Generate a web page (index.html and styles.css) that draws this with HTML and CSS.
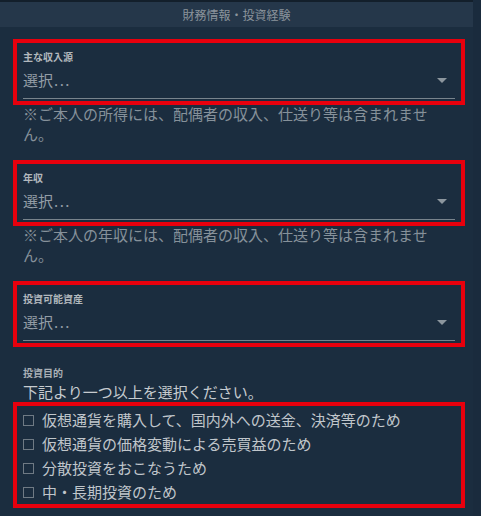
FILE: index.html
```html
<!DOCTYPE html>
<html lang="ja">
<head>
<meta charset="utf-8">
<title>財務情報・投資経験</title>
<link rel="stylesheet" href="styles.css">
</head>
<body>
<div class="panel">
  <div class="header">財務情報・投資経験</div>
  <div class="content">
    <div class="field">
      <div class="label">主な収入源</div>
      <div class="select"><span>選択<span class="dots">...</span></span><span class="arrow"></span></div>
    </div>
    <div class="helper">※ご本人の所得には、配偶者の収入、仕送り等は含まれません。</div>

    <div class="field">
      <div class="label">年収</div>
      <div class="select"><span>選択<span class="dots">...</span></span><span class="arrow"></span></div>
    </div>
    <div class="helper">※ご本人の年収には、配偶者の収入、仕送り等は含まれません。</div>

    <div class="field">
      <div class="label">投資可能資産</div>
      <div class="select"><span>選択<span class="dots">...</span></span><span class="arrow"></span></div>
    </div>

    <div class="section-label">投資目的</div>
    <div class="intro">下記より一つ以上を選択ください。</div>
    <div class="checks">
      <div class="check"><span class="box"></span><span>仮想通貨を購入して、国内外への送金、決済等のため</span></div>
      <div class="check"><span class="box"></span><span>仮想通貨の価格変動による売買益のため</span></div>
      <div class="check"><span class="box"></span><span>分散投資をおこなうため</span></div>
      <div class="check"><span class="box"></span><span>中・長期投資のため</span></div>
    </div>
  </div>
</div>
</body>
</html>
```
FILE: styles.css
```css
html, body {
  margin: 0;
  padding: 0;
}
body {
  background: #1a2b3d;
  font-family: "Noto Sans CJK JP", "Noto Sans", sans-serif;
  width: 481px;
  height: 516px;
  overflow: hidden;
}
.panel {
  width: 473px;
  min-height: 516px;
  background: #1b2d3f;
}
.header {
  height: 25px;
  line-height: 25px;
  border-top: 2px solid #131f2b;
  background: #25374a;
  color: #8b949c;
  font-size: 12px;
  text-align: center;
}
.content {
  padding: 12px 8px 0 13px;
}
.field {
  border: 4px solid #e8000d;
  padding: 7px 6px 2px 6px;
}
.label {
  font-size: 10px;
  line-height: 14px;
  font-weight: bold;
  color: #b2b8bd;
}
.select {
  margin-top: 5px;
  display: flex;
  justify-content: space-between;
  align-items: center;
  font-size: 15px;
  line-height: 22px;
  color: #939da6;
  padding-bottom: 7px;
  border-bottom: 1px solid #78838c;
}
.dots {
  letter-spacing: 1.5px;
  margin-left: 1px;
}
.arrow {
  width: 0;
  height: 0;
  border-left: 5px solid transparent;
  border-right: 5px solid transparent;
  border-top: 5px solid #8c969e;
  margin-right: 8px;
}
.helper {
  margin-top: -1px;
  margin-bottom: 16px;
  padding: 0 27px 0 10px;
  font-size: 15px;
  line-height: 20px;
  color: #86919a;
}
.section-label {
  margin-top: 19px;
  padding-left: 10px;
  font-size: 10px;
  line-height: 14px;
  font-weight: bold;
  color: #a9b0b6;
}
.intro {
  margin-top: 1px;
  padding-left: 10px;
  font-size: 15px;
  line-height: 22px;
  color: #c6cbcf;
}
.checks {
  margin-top: -1px;
  border: 4px solid #e8000d;
  padding: 2px 6px 0 6px;
}
.check {
  display: flex;
  align-items: center;
  gap: 8px;
  font-size: 15px;
  line-height: 24px;
  color: #c0c6cb;
}
.box {
  width: 9px;
  height: 9px;
  border: 1px solid #6f7a84;
  flex: none;
}
```
